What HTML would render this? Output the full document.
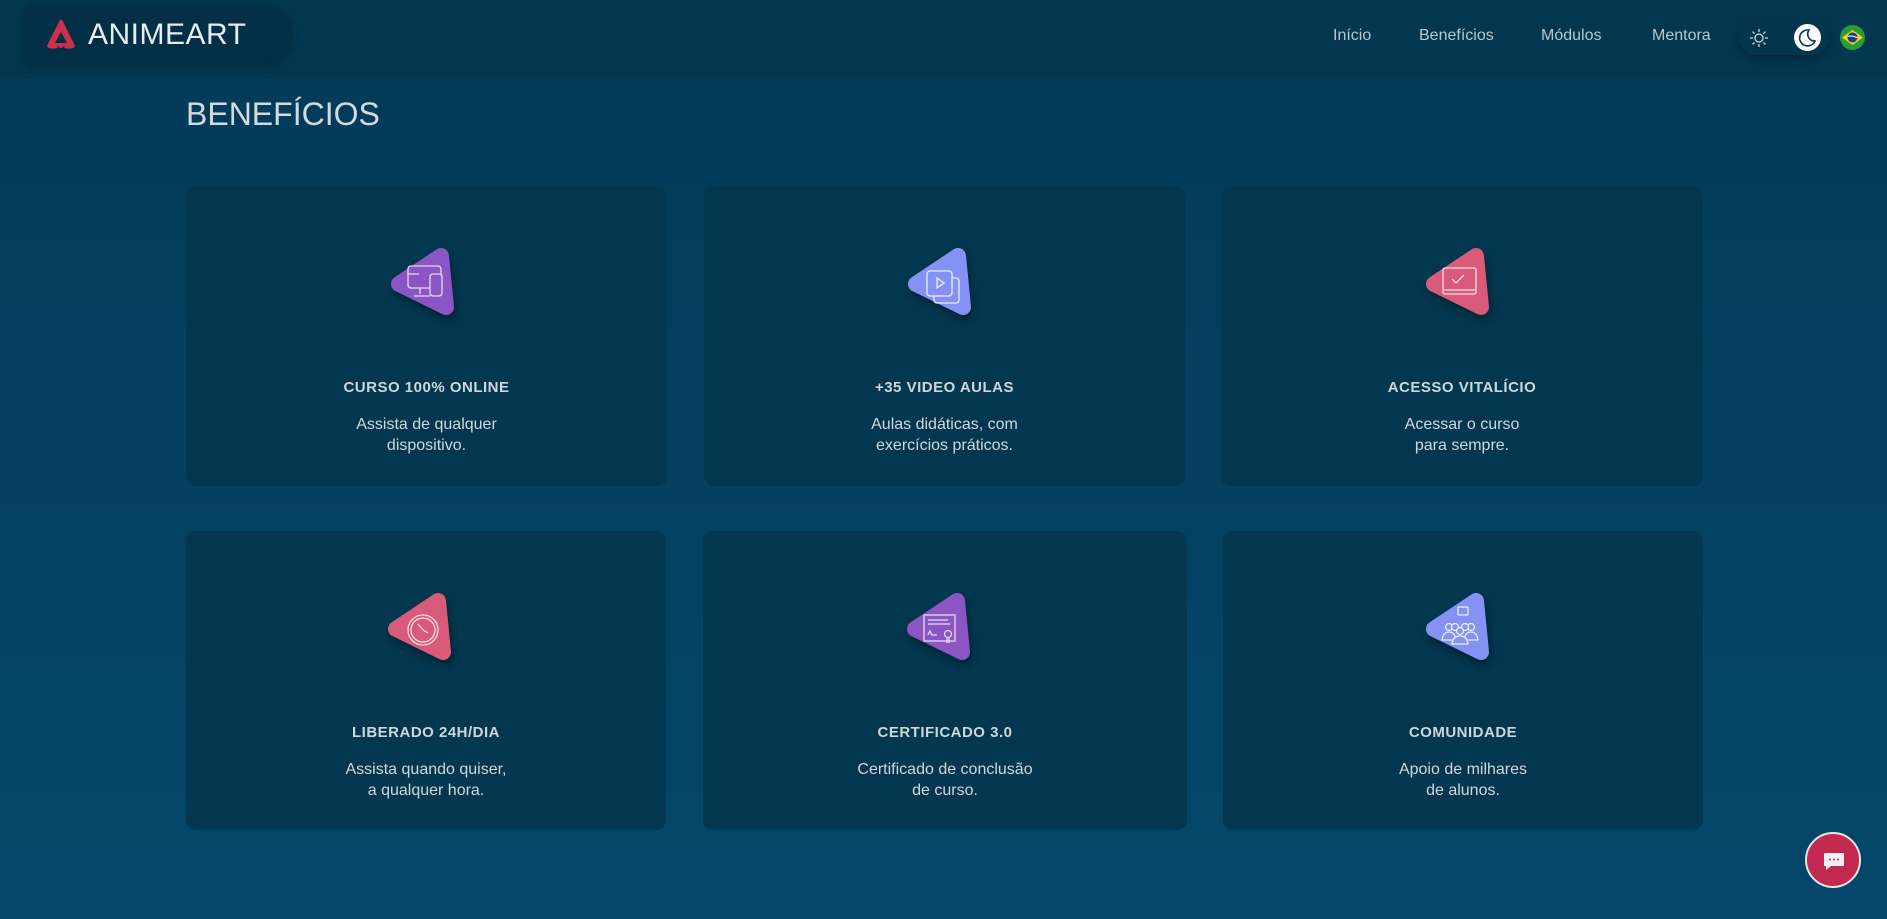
<!DOCTYPE html>
<html><head><meta charset="utf-8"><style>
*{margin:0;padding:0;box-sizing:border-box}
body{width:1887px;height:919px;overflow:hidden;background:linear-gradient(180deg,#033a57 0%,#04476a 100%);font-family:"Liberation Sans",sans-serif;position:relative}
.hdr{position:absolute;left:0;top:0;width:1887px;height:79px;background:#03374f}
.logo{position:absolute;left:24px;top:5px;width:268px;height:58px;background:#022f45;border-radius:8px 30px 30px 8px;box-shadow:0 3px 8px rgba(0,0,0,.25)}
.logo span{position:absolute;left:64px;top:13px;font-size:30px;color:#e6ecef;letter-spacing:.5px}
.nav{position:absolute;top:27px;font-size:16px;color:#b9c6ce}
.tog{position:absolute;left:1739px;top:20px;width:90px;height:35px;background:#03354d;border-radius:18px;box-shadow:0 4px 8px rgba(0,0,0,.3)}
h1{position:absolute;left:186px;top:96px;font-weight:normal;font-size:32px;color:#d3d9dd}
.card{position:absolute;background:#03374f;border-radius:10px;text-align:center;color:#d2d8dc}
.card h3{position:absolute;left:0;right:0;top:193px;font-size:15px;letter-spacing:.5px;font-weight:bold;color:#cfd6da}
.card p{position:absolute;left:0;right:0;top:228px;font-size:16px;line-height:21px;color:#d0d7db}
.ic{position:absolute;width:70px;height:72px;filter:drop-shadow(2px 5px 4px rgba(0,0,0,.35))}
.chat{position:absolute;left:1805px;top:832px;width:56px;height:56px;border-radius:50%;background:#c3294f;border:2px solid #dfe6ea}
</style></head><body>
<div class="hdr"></div>
<div class="logo"><svg style="position:absolute;left:22px;top:13px" width="30" height="32" viewBox="0 0 30 32"><path d="M15 3 L27 27 Q28 29 25 29 L20 29 A5 5 0 0 0 10 29 L5 29 Q2 29 3 27 Z" fill="#c9314f" stroke="#c9314f" stroke-width="3" stroke-linejoin="round"/><circle cx="15" cy="27" r="3" fill="#c9314f"/><path d="M15 14 L21 25 H9 Z" fill="#022f45"/></svg><span>ANIMEART</span></div>
<div class="nav" style="left:1333px">Início</div>
<div class="nav" style="left:1419px">Benefícios</div>
<div class="nav" style="left:1541px">Módulos</div>
<div class="nav" style="left:1652px">Mentora</div>
<div class="tog"><svg style="position:absolute;left:10px;top:8px" width="20" height="20" viewBox="0 0 20 20" stroke="#cfd8de" stroke-width="1.3" fill="none"><circle cx="10" cy="10" r="4"/><path d="M10 1v3M10 16v3M1 10h3M16 10h3M3.6 3.6l2 2M14.4 14.4l2 2M3.6 16.4l2-2M14.4 5.6l2-2"/></svg><div style="position:absolute;left:55px;top:4px;width:27px;height:27px;border-radius:50%;background:#fff"><svg width="27" height="27" viewBox="0 0 27 27"><path d="M15 6 A8 8 0 1 0 21 17 A7 7 0 0 1 15 6Z" fill="none" stroke="#03374f" stroke-width="1.6"/></svg></div></div>
<svg style="position:absolute;left:1840px;top:25px" width="25" height="25" viewBox="0 0 25 25"><circle cx="12.5" cy="12.5" r="12.5" fill="#2a9a3a"/><path d="M2 12.5 L12.5 5 L23 12.5 L12.5 20Z" fill="#f2d21a"/><circle cx="12.5" cy="12.5" r="5" fill="#1e3a8a"/><path d="M7.7 11.5 Q12.5 10 17.3 13" stroke="#fff" stroke-width="1" fill="none"/></svg>
<h1>BENEFÍCIOS</h1>

<div class="card" style="left:186px;top:186px;width:481px;height:300px"><h3>CURSO 100% ONLINE</h3><p>Assista de qualquer<br>dispositivo.</p></div>
<div class="card" style="left:704px;top:186px;width:481px;height:300px"><h3>+35 VIDEO AULAS</h3><p>Aulas didáticas, com<br>exercícios práticos.</p></div>
<div class="card" style="left:1221px;top:186px;width:482px;height:300px"><h3>ACESSO VITALÍCIO</h3><p>Acessar o curso<br>para sempre.</p></div>
<div class="card" style="left:186px;top:531px;width:480px;height:299px"><h3>LIBERADO 24H/DIA</h3><p>Assista quando quiser,<br>a qualquer hora.</p></div>
<div class="card" style="left:703px;top:531px;width:484px;height:299px"><h3>CERTIFICADO 3.0</h3><p>Certificado de conclusão<br>de curso.</p></div>
<div class="card" style="left:1223px;top:531px;width:480px;height:299px"><h3>COMUNIDADE</h3><p>Apoio de milhares<br>de alunos.</p></div>

<svg width="0" height="0" style="position:absolute"><defs><path id="tri" d="M10 37 L52 9 L57 60 Z"/></defs></svg>

<svg class="ic" style="left:389px;top:247px" viewBox="0 0 70 72"><use href="#tri" fill="#8c55c4" stroke="#8c55c4" stroke-width="16" stroke-linejoin="round"/><g fill="none" stroke="#e4dcef" stroke-width="1.3"><rect x="19" y="19" width="33" height="22" rx="3"/><path d="M19 27h11M31 41v6M25 49h16"/><rect x="41" y="27" width="12" height="22" rx="3" fill="#8c55c4"/></g></svg>
<svg class="ic" style="left:906px;top:247px" viewBox="0 0 70 72"><use href="#tri" fill="#8493f3" stroke="#8493f3" stroke-width="16" stroke-linejoin="round"/><g fill="none" stroke="#eceefd" stroke-width="1.3"><rect x="28" y="31" width="25" height="25" rx="3"/><rect x="21" y="24" width="25" height="25" rx="3" fill="#8493f3"/><path d="M31 31l7 5-7 5z"/></g></svg>
<svg class="ic" style="left:1424px;top:247px" viewBox="0 0 70 72"><use href="#tri" fill="#d95a79" stroke="#d95a79" stroke-width="16" stroke-linejoin="round"/><g fill="none" stroke="#f6dde3" stroke-width="1.3"><rect x="19" y="21" width="33" height="26" rx="2"/><path d="M19 43h33M28 32l4 4 8-8"/></g></svg>
<svg class="ic" style="left:386px;top:592px" viewBox="0 0 70 72"><use href="#tri" fill="#d95a79" stroke="#d95a79" stroke-width="16" stroke-linejoin="round"/><g fill="none" stroke="#f6dde3" stroke-width="1.3"><circle cx="37" cy="38" r="15"/><circle cx="37" cy="38" r="12"/><path d="M37 38l-5-6M37 38l5 3"/></g></svg>
<svg class="ic" style="left:905px;top:592px" viewBox="0 0 70 72"><use href="#tri" fill="#8c55c4" stroke="#8c55c4" stroke-width="16" stroke-linejoin="round"/><g fill="none" stroke="#e4dcef" stroke-width="1.3"><rect x="19" y="23" width="31" height="26"/><path d="M23 28h20M23 32h22M23 43l2-4 2 4h5"/><circle cx="43" cy="42" r="3.5"/><path d="M42 46v5M44 46v5"/></g></svg>
<svg class="ic" style="left:1424px;top:592px" viewBox="0 0 70 72"><use href="#tri" fill="#8493f3" stroke="#8493f3" stroke-width="16" stroke-linejoin="round"/><g fill="#8493f3" stroke="#eceefd" stroke-width="1.3"><rect x="34" y="15" width="10" height="8" rx="1"/><circle cx="25" cy="35" r="3.5"/><circle cx="47" cy="35" r="3.5"/><path d="M18 48q1-8 7-8t7 8z"/><path d="M40 48q1-8 7-8t7 8z"/><circle cx="31" cy="35" r="3.5"/><circle cx="41" cy="35" r="3.5"/><circle cx="36" cy="39" r="3.5"/><path d="M28 52q1-8 8-8t8 8z"/></g></svg>

<div class="chat"><svg style="position:absolute;left:15px;top:15px" width="24" height="24" viewBox="0 0 24 24"><path d="M3 4h18q1 0 1 1v11q0 1-1 1H9l-5 4v-4H3q-1 0-1-1V5q0-1 1-1z" fill="#eef0f2"/><circle cx="8" cy="10.5" r="1" fill="#c3294f"/><circle cx="12" cy="10.5" r="1" fill="#c3294f"/><circle cx="16" cy="10.5" r="1" fill="#c3294f"/></svg></div>
</body></html>
